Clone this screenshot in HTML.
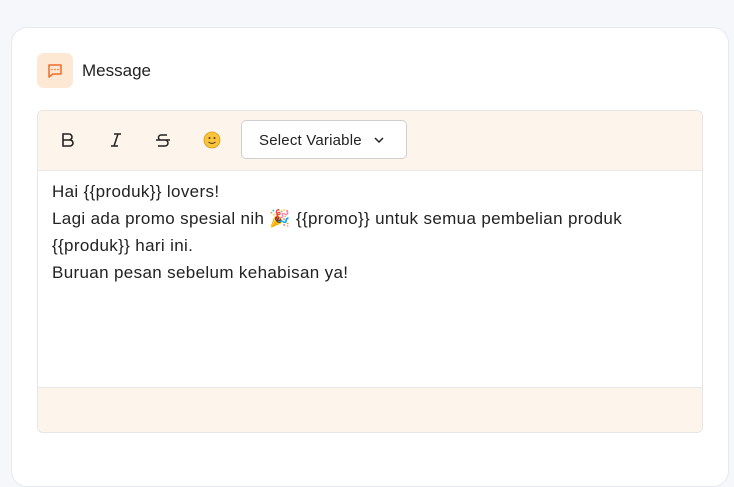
<!DOCTYPE html>
<html><head><style>
body{margin:0;width:734px;height:453px;background:#f5f7fa;font-family:"Liberation Sans",sans-serif;overflow:hidden;position:relative;color:#1f1f1f}
.card{position:absolute;left:11px;top:27px;width:718px;height:460px;background:#fff;border:1px solid #e6e9ee;border-radius:16px;box-sizing:border-box}
.ic{position:absolute;left:37px;top:53px;width:36px;height:35px;background:#fde8d3;border-radius:7px}
.title{position:absolute;left:82px;top:61px;font-size:17px;color:#222}
.ed{position:absolute;left:37px;top:110px;width:666px;height:323px;border:1px solid #e5e5e5;border-radius:6px;box-sizing:border-box;overflow:hidden}
.tb{height:59px;background:#fdf5ec;border-bottom:1px solid #e8e8e8;position:relative}
.ft{position:absolute;left:0;right:0;bottom:0;height:44px;background:#fdf5ec;border-top:1px solid #e8e8e8}
.sel{position:absolute;left:203px;top:9px;width:166px;height:39px;background:#fff;border:1px solid #cfcfcf;border-radius:5px;box-sizing:border-box;font-size:15px;line-height:39px;padding-left:17px;color:#222;letter-spacing:0.2px}
.txt{position:absolute;left:14px;top:67px;font-size:17px;line-height:27px;color:#222;white-space:nowrap;letter-spacing:0.35px}
</style></head><body>
<div class="card"></div>
<div class="ic"><svg width="36" height="35" viewBox="0 0 36 35"><path d="M12 12h12v9h-8l-4 3z" fill="none" stroke="#f06a2a" stroke-width="1.5" stroke-linejoin="round"/><circle cx="15" cy="16.5" r=".8" fill="#f06a2a"/><circle cx="18" cy="16.5" r=".8" fill="#f06a2a"/><circle cx="21" cy="16.5" r=".8" fill="#f06a2a"/></svg></div>
<div class="title">Message</div>
<div class="ed">
<div class="tb">
<svg style="position:absolute;left:22px;top:21px" width="16" height="16" viewBox="0 0 16 16"><path d="M3 2h6a3 3 0 0 1 0 6H3zM3 8h7a3 3 0 0 1 0 6H3z" fill="none" stroke="#222" stroke-width="1.6"/></svg>
<svg style="position:absolute;left:70px;top:21px" width="16" height="16" viewBox="0 0 16 16"><path d="M6 2h7M3 14h7M10 2L6 14" fill="none" stroke="#222" stroke-width="1.5"/></svg>
<svg style="position:absolute;left:117px;top:21px" width="16" height="16" viewBox="0 0 16 16"><path d="M12 3H6a2.5 2.5 0 0 0 0 5h4a2.8 2.8 0 0 1 0 6H3M1 8h14" fill="none" stroke="#222" stroke-width="1.5"/></svg>
<svg style="position:absolute;left:165px;top:20px" width="18" height="18" viewBox="0 0 18 18"><circle cx="9" cy="9" r="8" fill="#f8c43c" stroke="#d69a1a" stroke-width=".8"/><circle cx="6.5" cy="7" r="1" fill="#5a3a10"/><circle cx="11.5" cy="7" r="1" fill="#5a3a10"/><path d="M5.5 11q3.5 3 7 0" fill="none" stroke="#5a3a10" stroke-width="1"/></svg>
<div class="sel">Select Variable<svg style="position:absolute;left:131px;top:15px" width="12" height="8" viewBox="0 0 12 8"><path d="M2 2l4 4 4-4" fill="none" stroke="#222" stroke-width="1.5"/></svg></div>
</div>
<div class="txt">Hai {{produk}} lovers!<br>Lagi ada promo spesial nih 🎉 {{promo}} untuk semua pembelian produk<br>{{produk}} hari ini.<br>Buruan pesan sebelum kehabisan ya!</div>
<div class="ft"></div>
</div>
</body></html>
